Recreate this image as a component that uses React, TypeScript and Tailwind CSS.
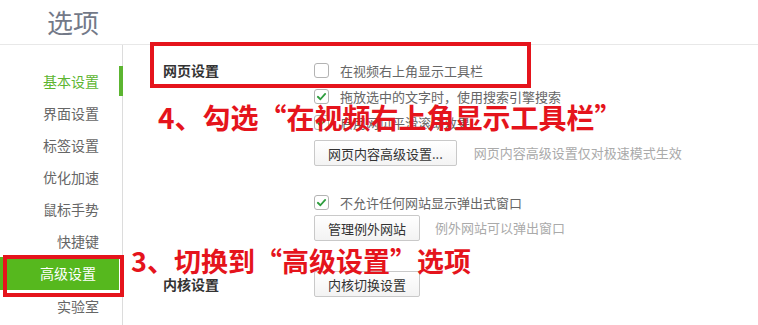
import React from "react";

const cjk = "font-['Noto_Sans_CJK_SC','Noto_Sans',sans-serif]";

const navItems = ["基本设置", "界面设置", "标签设置", "优化加速", "鼠标手势", "快捷键", "高级设置", "实验室"];

function CheckBox({ checked }: { checked?: boolean }) {
  return (
    <span className="w-[15px] h-[15px] rounded-[3px] border border-[#b3b3b3] bg-white flex items-center justify-center shrink-0">
      {checked && (
        <svg viewBox="0 0 12 12" className="w-[11px] h-[11px]">
          <path d="M2 6.3 L4.8 9 L10 3.2" fill="none" stroke="#2f9e3f" strokeWidth="2" strokeLinecap="round" strokeLinejoin="round" />
        </svg>
      )}
    </span>
  );
}

function CheckRow({ checked, label }: { checked?: boolean; label: string }) {
  return (
    <div className="flex items-center gap-[11px] h-[26px]">
      <CheckBox checked={checked} />
      <span className="text-[13px] text-[#666] leading-none">{label}</span>
    </div>
  );
}

function Btn({ children }: { children: React.ReactNode }) {
  return (
    <button className="h-[26px] px-[13px] border border-[#c9c9c9] rounded-[2px] bg-gradient-to-b from-white to-[#f3f3f3] text-[13px] text-[#333] leading-none">
      {children}
    </button>
  );
}

export default function App() {
  return (
    <div className={`relative w-[758px] h-[325px] bg-white overflow-hidden ${cjk}`}>
      {/* header */}
      <div className="h-[45px] border-b border-[#e8e8e8] flex items-center pl-[47px]">
        <h1 className="text-[26px] text-[#737988] leading-none">选项</h1>
      </div>

      <div className="flex h-[280px]">
        {/* sidebar */}
        <div className="w-[123px] border-r border-[#dcdcdc] pt-[20px] flex flex-col shrink-0">
          {navItems.map((item, i) => {
            const active = i === 0;
            const selected = i === 6;
            return (
              <div
                key={item}
                className={
                  "relative h-[32px] flex items-center justify-end pr-[23px] text-[14px] " +
                  (selected ? "bg-[#56b81e] text-white mr-[3px] h-[33px]" : active ? "text-[#5cb531]" : "text-[#666]")
                }
              >
                {item}
                {active && <span className="absolute right-[-1px] top-[1px] w-[4px] h-[30px] bg-[#5cb531]" />}
              </div>
            );
          })}
        </div>

        {/* content */}
        <div className="flex-1 pt-[12px]">
          <div className="flex">
            <div className="w-[191px] pl-[40px] h-[26px] flex items-center text-[14px] font-bold text-[#333]">网页设置</div>
            <div className="flex flex-col">
              <CheckRow label="在视频右上角显示工具栏" />
              <CheckRow checked label="拖放选中的文字时，使用搜索引擎搜索" />
              <CheckRow checked label="启用网页平滑滚动效果" />
              <div className="flex items-center gap-[17px] mt-[5px]">
                <Btn>网页内容高级设置...</Btn>
                <span className="text-[13px] text-[#aaa]">网页内容高级设置仅对极速模式生效</span>
              </div>
              <div className="mt-[23px]">
                <CheckRow checked label="不允许任何网站显示弹出式窗口" />
              </div>
              <div className="flex items-center gap-[15px]">
                <Btn>管理例外网站</Btn>
                <span className="text-[13px] text-[#aaa]">例外网站可以弹出窗口</span>
              </div>
            </div>
          </div>

          <div className="flex mt-[30px]">
            <div className="w-[191px] pl-[40px] h-[26px] flex items-center text-[14px] font-bold text-[#333]">内核设置</div>
            <Btn>内核切换设置</Btn>
          </div>
        </div>
      </div>

      {/* annotations */}
      <div className="absolute left-[150px] top-[42px] w-[381px] h-[46px] border-[4px] border-[#e5141c]" />
      <div className="absolute left-[3px] top-[255px] w-[121px] h-[42px] border-[4px] border-[#e5141c]" />
      <div className="absolute left-[158px] top-[97px] text-[28px] font-bold text-[#e5141c] leading-[40px] whitespace-nowrap">
        4、勾选“在视频右上角显示工具栏”
      </div>
      <div className="absolute left-[131px] top-[241px] text-[27px] font-bold text-[#e5141c] leading-[40px] whitespace-nowrap">
        3、切换到“高级设置”选项
      </div>
    </div>
  );
}
